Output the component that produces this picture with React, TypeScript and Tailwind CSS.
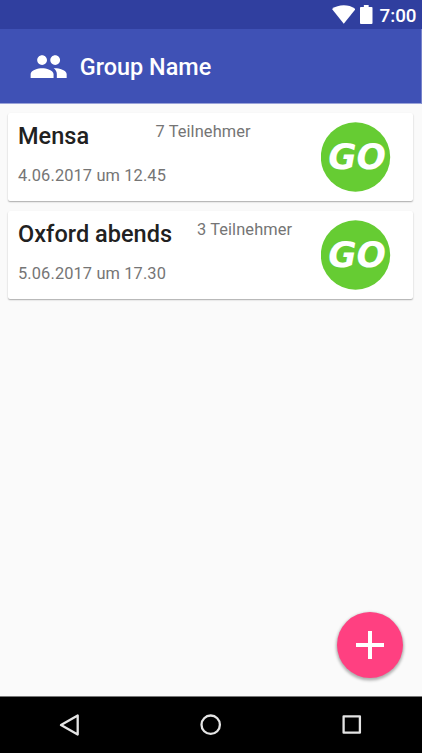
import React from "react";

type Meeting = {
  title: string;
  people: string;
  date: string;
  titleClass: string;
};

const meetings: Meeting[] = [
  {
    title: "Mensa",
    people: "7 Teilnehmer",
    date: "4.06.2017 um 12.45",
    titleClass: "w-[137.5px]",
  },
  {
    title: "Oxford abends",
    people: "3 Teilnehmer",
    date: "5.06.2017 um 17.30",
    titleClass: "w-[179px]",
  },
];

function StatusBar() {
  return (
    <div className="flex h-[29px] items-center justify-end bg-[#303f9f] pr-[5.5px] text-white">
      <svg className="mr-[5px] h-[19px] w-[23.5px]" viewBox="0 0 24 19" preserveAspectRatio="none" fill="currentColor">
        <path d="M0 4C6.6-1 17.4-1 24 4L12 18.8Z" />
      </svg>
      <svg className="mr-[7px] h-[19px] w-[12.5px]" viewBox="0 0 13 20" preserveAspectRatio="none" fill="currentColor">
        <path d="M4 0H9V2H12Q13 2 13 3V19Q13 20 12 20H1Q0 20 0 19V3Q0 2 1 2H4Z" />
      </svg>
      <span className="pt-[3px] text-[18.8px] leading-[22px] font-medium">7:00</span>
    </div>
  );
}

function GoButton() {
  return (
    <button className="mt-[9px] size-[70px] shrink-0 rounded-full">
      <svg viewBox="0 0 70 70" className="size-full">
        <circle cx="34.5" cy="35" r="34.7" fill="#66cc33" />
        <text
          x="36.1"
          y="46.9"
          textAnchor="middle"
          textLength="57.8"
          lengthAdjust="spacingAndGlyphs"
          fill="#fff"
          fontFamily="DejaVu Sans, sans-serif"
          fontSize="36.2"
          fontWeight="700"
          fontStyle="italic"
        >
          GO
        </text>
      </svg>
    </button>
  );
}

function Card({ m }: { m: Meeting }) {
  return (
    <article className="flex h-[88px] justify-between rounded-[2px] bg-white pr-[22px] pl-[10px] shadow-[0_1px_1.5px_rgba(0,0,0,0.32)]">
      <div className="whitespace-nowrap">
        <div className="flex h-[50px]">
          <h2 className={`pt-[9px] text-[23.5px] leading-[28px] font-medium tracking-[0.03px] text-[#212121] ${m.titleClass}`}>
            {m.title}
          </h2>
          <span className="pt-[9px] text-[16.4px] leading-[20px] tracking-[0.1px] text-[#757575]">{m.people}</span>
        </div>
        <p className="pt-[3px] text-[16.4px] leading-[20px] tracking-[0.12px] text-[#757575]">{m.date}</p>
      </div>
      <GoButton />
    </article>
  );
}

export default function App() {
  return (
    <div className="relative flex h-[753px] w-[422px] flex-col overflow-hidden bg-[#fafafa] font-[Roboto,sans-serif]">
      <StatusBar />
      <header className="flex h-[74.5px] items-center border-r border-b border-r-[#7783cb] border-b-[#9aa3d8] bg-[#3f51b5] pl-[29.3px] text-white">
        <svg className="mt-[2px] size-[39.3px]" viewBox="0 0 24 24" fill="currentColor">
          <path d="M16 11c1.66 0 2.99-1.34 2.99-3S17.66 5 16 5c-1.66 0-3 1.34-3 3s1.34 3 3 3zm-8 0c1.66 0 2.99-1.34 2.99-3S9.66 5 8 5C6.34 5 5 6.34 5 8s1.34 3 3 3zm0 2c-2.33 0-7 1.17-7 3.5V19h14v-2.5c0-2.33-4.67-3.5-7-3.5zm8 0c-.29 0-.62.02-.97.05 1.16.84 1.97 1.97 1.97 3.45V19h6v-2.5c0-2.33-4.67-3.5-7-3.5z" />
        </svg>
        <h1 className="mt-[3px] ml-[11.2px] text-[23.4px] leading-[28px] font-medium tracking-[0.03px]">Group Name</h1>
      </header>
      <main className="flex flex-1 flex-col gap-[9.75px] pt-[9.5px] pr-[9.5px] pl-[8px]">
        {meetings.map((m) => (
          <Card key={m.title} m={m} />
        ))}
      </main>
      <button className="absolute top-[612px] left-[337px] flex size-[66px] items-center justify-center rounded-full bg-[#ff4081] shadow-[0_1.5px_3px_1px_rgba(0,0,0,0.3)]">
        <svg className="size-[28px]" viewBox="0 0 28 28" fill="none" stroke="#fff" strokeWidth="4">
          <path d="M14 0V28M0 14H28" />
        </svg>
      </button>
      <nav className="flex h-[57px] items-center border-t border-[#777] bg-black text-[#e4e4e4]">
        <svg className="ml-[58px] h-[24px] w-[22px]" viewBox="0 0 22 24" fill="none" stroke="currentColor" strokeWidth="2.3" strokeLinejoin="round">
          <path d="M19.7 2.5V21.5L3 12Z" />
        </svg>
        <svg className="ml-[119.5px] size-[22px]" viewBox="0 0 22 22" fill="none" stroke="currentColor" strokeWidth="2.3">
          <circle cx="10.7" cy="10.7" r="9.2" />
        </svg>
        <svg className="ml-[119px] size-[22px]" viewBox="0 0 22 22" fill="none" stroke="currentColor" strokeWidth="2.3" strokeLinejoin="round">
          <path d="M2.6 2.4H18.9V18.7H2.6Z" />
        </svg>
      </nav>
    </div>
  );
}
